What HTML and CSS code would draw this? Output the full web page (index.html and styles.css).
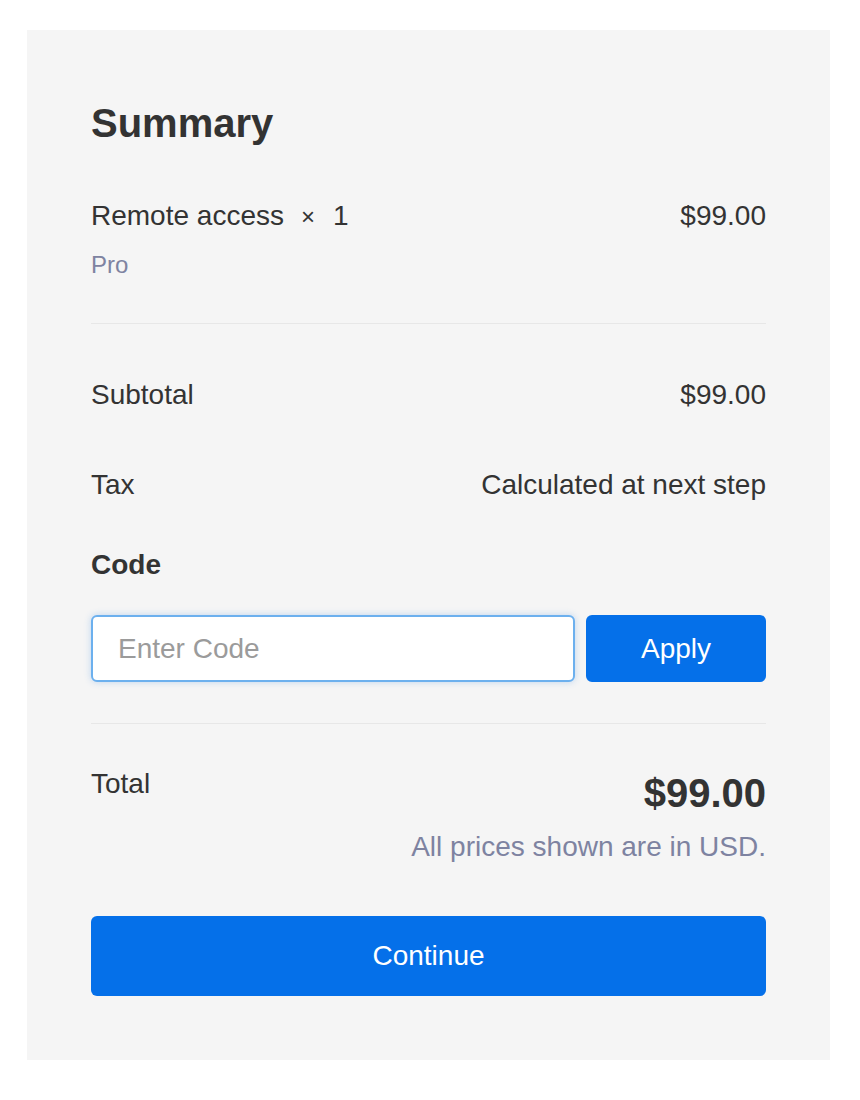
FILE: index.html
```html
<!DOCTYPE html>
<html lang="en">
<head>
<meta charset="utf-8">
<title>Summary</title>
<link rel="stylesheet" href="styles.css">
</head>
<body>
<div class="panel">
  <h1 class="title">Summary</h1>
  <div class="item">
    <div class="row">
      <span class="item-name">Remote access<span class="times">×</span><span class="qty">1</span></span>
      <span>$99.00</span>
    </div>
    <div class="plan">Pro</div>
  </div>
  <div class="row subtotal">
    <span>Subtotal</span>
    <span>$99.00</span>
  </div>
  <div class="row tax">
    <span>Tax</span>
    <span>Calculated at next step</span>
  </div>
  <div class="code-label">Code</div>
  <div class="code-form">
    <input class="code-input" type="text" placeholder="Enter Code">
    <button class="apply" type="button">Apply</button>
  </div>
  <div class="total">
    <span class="total-label">Total</span>
    <div class="total-right">
      <div class="total-amount">$99.00</div>
      <div class="note">All prices shown are in USD.</div>
    </div>
  </div>
  <button class="continue" type="button">Continue</button>
</div>
</body>
</html>
```

FILE: styles.css
```css
html, body {
  margin: 0;
  padding: 0;
  background: #ffffff;
}
body {
  font-family: "Liberation Sans", Arial, Helvetica, sans-serif;
  color: #333333;
}
.panel {
  box-sizing: border-box;
  width: 803px;
  margin: 30px 0 40px 27px;
  padding: 64px 64px 64px 64px;
  background: #f5f5f5;
}
.title {
  margin: 0;
  font-size: 40px;
  line-height: 58px;
  font-weight: 700;
  color: #333333;
}
.item {
  margin-top: 48px;
  padding-bottom: 44px;
  border-bottom: 1px solid #e7e7e7;
}
.row {
  display: flex;
  justify-content: space-between;
  font-size: 28px;
  line-height: 32px;
}
.times {
  font-size: 24px;
  margin-left: 17px;
}
.qty {
  margin-left: 18px;
}
.plan {
  margin-top: 18px;
  font-size: 24px;
  line-height: 28px;
  color: #7e83a1;
}
.subtotal {
  margin-top: 55px;
}
.tax {
  margin-top: 58px;
}
.code-label {
  margin-top: 48px;
  font-size: 28px;
  line-height: 32px;
  font-weight: 700;
}
.code-form {
  display: flex;
  gap: 11px;
  margin-top: 34px;
  padding-bottom: 41px;
  border-bottom: 1px solid #e7e7e7;
}
.code-input {
  flex: 1;
  min-width: 0;
  box-sizing: border-box;
  height: 67px;
  margin: 0;
  padding: 0 25px;
  border: 2px solid #6cb0ee;
  border-radius: 6px;
  background: #ffffff;
  box-shadow: 0 0 7px rgba(60, 140, 230, 0.3);
  font-family: "Liberation Sans", Arial, Helvetica, sans-serif;
  font-size: 28px;
  color: #333333;
  outline: none;
}
.code-input::placeholder {
  color: #9b9b9b;
}
.apply {
  width: 180px;
  height: 67px;
  margin: 0;
  padding: 0;
  border: 0;
  border-radius: 6px;
  background: #0570e9;
  color: #ffffff;
  font-family: "Liberation Sans", Arial, Helvetica, sans-serif;
  font-size: 28px;
}
.total {
  display: flex;
  justify-content: space-between;
  align-items: flex-start;
  margin-top: 44px;
}
.total-label {
  font-size: 28px;
  line-height: 32px;
}
.total-right {
  text-align: right;
}
.total-amount {
  font-size: 40px;
  line-height: 50px;
  font-weight: 700;
}
.note {
  margin-top: 13px;
  font-size: 28px;
  line-height: 32px;
  color: #7e83a1;
}
.continue {
  display: block;
  width: 100%;
  height: 80px;
  margin: 53px 0 0 0;
  padding: 0;
  border: 0;
  border-radius: 6px;
  background: #0570e9;
  color: #ffffff;
  font-family: "Liberation Sans", Arial, Helvetica, sans-serif;
  font-size: 28px;
}
```
